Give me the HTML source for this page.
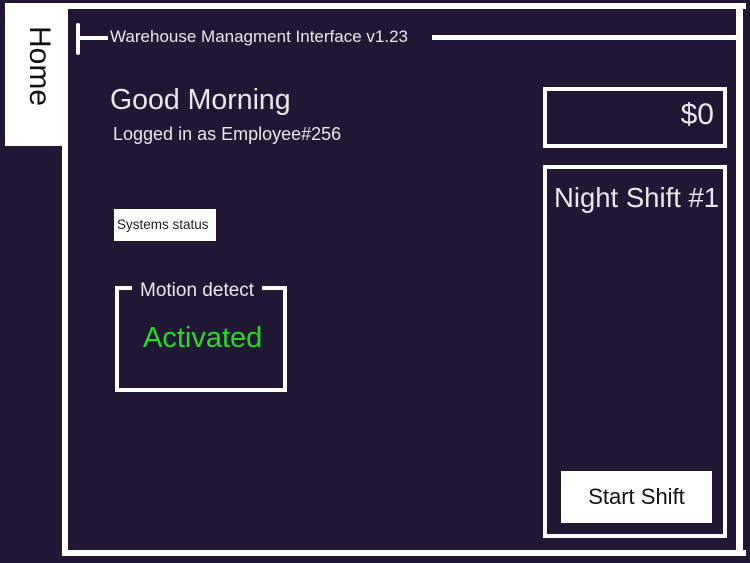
<!DOCTYPE html>
<html><head><style>
*{margin:0;padding:0;box-sizing:border-box}
body{width:750px;height:563px;background:#1f1734;position:relative;overflow:hidden;font-family:"Liberation Sans","DejaVu Sans",sans-serif;color:#e8e6ee}
.a{position:absolute}
.w{background:#fff}
</style></head><body>
<div class="a w" style="left:5px;top:3px;width:58px;height:143px"></div>
<div class="a" style="left:54px;top:26px;transform-origin:0 0;transform:rotate(90deg);font-size:30px;color:#111;white-space:nowrap;line-height:1">Home</div>
<div class="a" style="left:62px;top:3px;width:684px;height:553px;border:6px solid #fff;border-right:none"></div>
<div class="a w" style="left:736px;top:3px;width:7px;height:553px"></div>
<div class="a w" style="left:432px;top:35px;width:306px;height:5px"></div>
<div class="a w" style="left:76px;top:23px;width:4px;height:32px;border-radius:2px"></div>
<div class="a w" style="left:78px;top:36px;width:30px;height:4px"></div>
<div class="a" style="left:110px;top:27px;font-size:17px;white-space:nowrap">Warehouse Managment Interface v1.23</div>
<div class="a" style="left:110px;top:84px;font-size:28.5px;white-space:nowrap">Good Morning</div>
<div class="a" style="left:113px;top:124px;font-size:18px;white-space:nowrap">Logged in as Employee#256</div>
<div class="a w" style="left:114px;top:209px;width:102px;height:32px;color:#222;font-size:13.5px;line-height:32px;padding-left:3px;white-space:nowrap">Systems status</div>
<div class="a" style="left:115px;top:286px;width:172px;height:106px;border:4px solid #fff"></div>
<div class="a" style="left:132px;top:279px;width:130px;height:16px;background:#1f1734"></div>
<div class="a" style="left:140px;top:280px;font-size:19px;white-space:nowrap">Motion detect</div>
<div class="a" style="left:143px;top:322px;font-size:29px;color:#22dd22;white-space:nowrap">Activated</div>
<div class="a" style="left:543px;top:87px;width:184px;height:61px;border:4px solid #fff"></div>
<div class="a" style="left:600px;top:98px;width:114px;text-align:right;font-size:30px">$0</div>
<div class="a" style="left:543px;top:165px;width:184px;height:373px;border:4px solid #fff"></div>
<div class="a" style="left:554px;top:182px;font-size:27.5px;white-space:nowrap">Night Shift #1</div>
<div class="a w" style="left:561px;top:471px;width:151px;height:52px;color:#111;font-size:22px;line-height:52px;text-align:center">Start Shift</div>
</body></html>
